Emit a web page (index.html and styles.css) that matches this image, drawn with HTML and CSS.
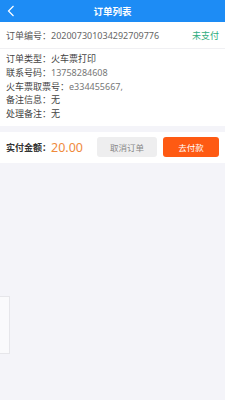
FILE: index.html
```html
<!DOCTYPE html>
<html lang="zh">
<head>
<meta charset="utf-8">
<link rel="stylesheet" href="styles.css">
</head>
<body>
<header class="bar">
  <svg class="back" width="8" height="12" viewBox="0 0 8 12"><path d="M6.5 1 L1.5 6 L6.5 11" fill="none" stroke="#fff" stroke-width="1.2"/></svg>
  <h1 class="title">订单列表</h1>
</header>
<section class="order">
  <div class="head">
    <span class="no"><span class="lbl">订单编号：</span>202007301034292709776</span>
    <span class="status">未支付</span>
  </div>
  <div class="info">
    <div class="line"><span class="k">订单类型：</span><span class="v dark">火车票打印</span></div>
    <div class="line"><span class="k">联系号码：</span><span class="v">13758284608</span></div>
    <div class="line"><span class="k">火车票取票号：</span><span class="v">e334455667,</span></div>
    <div class="line"><span class="k">备注信息：</span><span class="v dark">无</span></div>
    <div class="line"><span class="k">处理备注：</span><span class="v dark">无</span></div>
  </div>
</section>
<section class="pay">
  <div class="amount"><span class="alabel">实付金额：</span><span class="num">20.00</span></div>
  <div class="btns">
    <button class="btn cancel">取消订单</button>
    <button class="btn go">去付款</button>
  </div>
</section>
<div class="tab"></div>
</body>
</html>
```
FILE: styles.css
```css
html, body { margin: 0; padding: 0; }
body {
  width: 225px;
  height: 400px;
  background: #f4f4f9;
  font-family: "Noto Sans", "Noto Sans CJK SC", sans-serif;
  position: relative;
  overflow: hidden;
}
.bar {
  height: 22px;
  background: #1d8cf5;
  display: flex;
  align-items: center;
  justify-content: center;
  position: relative;
}
.back { position: absolute; left: 7px; top: 5px; }
.title {
  margin: 0;
  color: #fff;
  font-size: 9.5px;
  font-weight: 700;
}
.order { background: #fff; }
.head {
  height: 25px;
  display: flex;
  align-items: center;
  justify-content: space-between;
  padding: 1px 6px 0;
  border-bottom: 1px solid #f0f0f3;
  font-size: 9px;
}
.no { color: #666; }
.lbl { color: #555; }
.status { color: #2fad7e; }
.info {
  padding: 3px 6px 5px;
  font-size: 9px;
  line-height: 13.8px;
}
.k { color: #444; }
.v { color: #777; }
.v.dark { color: #444; }
.pay {
  margin-top: 6px;
  background: #fff;
  height: 31px;
  display: flex;
  align-items: center;
  justify-content: space-between;
  padding: 0 6px;
}
.amount { display: flex; align-items: center; }
.alabel { font-size: 9px; font-weight: 700; color: #333; }
.num { font-size: 12.5px; color: #ef8a3c; font-weight: 400; }
.btns { display: flex; gap: 6px; }
.btn {
  border: none;
  height: 20px;
  border-radius: 3px;
  font-family: "Noto Sans CJK SC", sans-serif;
  font-size: 8.5px;
  padding: 0;
}
.cancel { width: 60px; background: #eeeeef; color: #888; }
.go { width: 56px; background: #fe5a13; color: #fff; }
.tab {
  position: absolute;
  left: 0;
  top: 296px;
  width: 9px;
  height: 56px;
  background: #fafafc;
  border: 1px solid #e6e6ea;
  border-left: none;
}
```
